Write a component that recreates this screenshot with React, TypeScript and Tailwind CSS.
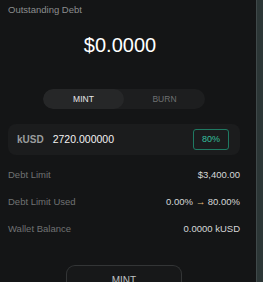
import React from "react";

const rows = [
  { label: "Debt Limit", value: <span>$3,400.00</span> },
  {
    label: "Debt Limit Used",
    value: (
      <span>
        0.00% <span className="text-[#e2b977]">→</span> 80.00%
      </span>
    ),
  },
  { label: "Wallet Balance", value: <span>0.0000 kUSD</span> },
];

export default function App() {
  return (
    <div
      className="flex h-[282px] w-[263px] overflow-hidden bg-[#141516]"
      style={{ fontFamily: '"Liberation Sans", Arial, sans-serif' }}
    >
      <div className="flex w-[256px] flex-col overflow-hidden pl-2 pr-4">
        <p className="shrink-0 pt-[4px] text-[9.5px] leading-[11px] text-[#8b8d8e]">Outstanding Debt</p>

        <div className="mt-[18px] flex shrink-0 justify-center pr-[8px] text-[20px] leading-[24px] text-white">
          $0.0000
        </div>

        <div className="mx-auto mt-[32px] flex h-[20px] w-[162px] shrink-0 overflow-hidden rounded-full bg-[#1d1e1f] text-[8.5px]">
          <button className="flex flex-1 items-center justify-center rounded-full bg-[#262728] text-[#e8e8e8]">
            MINT
          </button>
          <button className="flex flex-1 items-center justify-center text-[#6f7172]">BURN</button>
        </div>

        <div className="mt-[15px] flex h-[31px] shrink-0 items-center rounded-[8px] bg-[#1b1c1d] pl-[9px] pr-[11px]">
          <span className="text-[10px] font-bold text-[#9a9c9d]">kUSD</span>
          <span className="ml-[9px] flex-1 text-[10.5px] text-[#f2f2f2]">2720.000000</span>
          <span className="flex h-[21px] w-[36px] items-center justify-center rounded-[3px] border border-[#1f7a63] text-[9px] text-[#35c09f]">
            80%
          </span>
        </div>

        <div className="mt-[14px] flex shrink-0 flex-col gap-[15px] text-[9.5px] leading-[12px]">
          {rows.map((r) => (
            <div key={r.label} className="flex items-center justify-between">
              <span className="text-[#707273]">{r.label}</span>
              <span className="text-[#d6d7d8]">{r.value}</span>
            </div>
          ))}
        </div>

        <button className="mx-auto mt-[30px] flex h-[30px] w-[116px] shrink-0 justify-center rounded-t-[9px] border border-b-0 border-[#333536] bg-[#171819] pt-[7px] text-[10px] text-[#bfc1c2]">
          MINT
        </button>
      </div>
      <div className="w-[7px] border-l border-[#40494a] bg-[#2c3636]" />
    </div>
  );
}
